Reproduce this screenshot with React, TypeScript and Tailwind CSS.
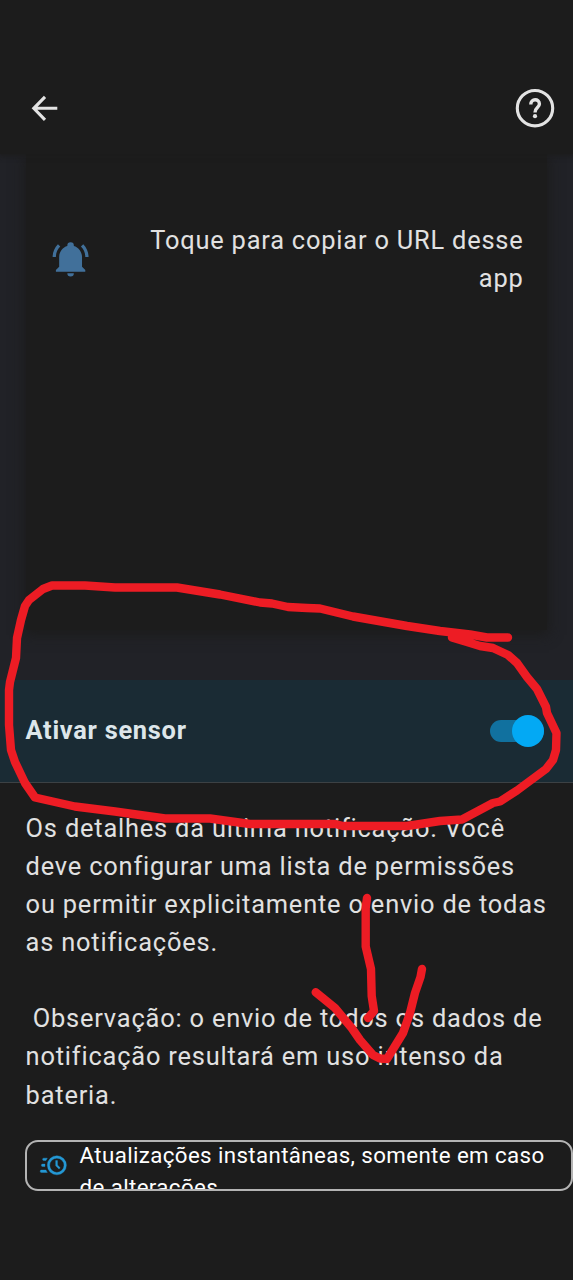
const BELL =
  "M21,19V20H3V19L5,17V11C5,7.9 7.03,5.17 10,4.29C10,4.19 10,4.1 10,4A2,2 0 0,1 12,2A2,2 0 0,1 14,4C14,4.1 14,4.19 14,4.29C16.97,5.17 19,7.9 19,11V17L21,19M14,21A2,2 0 0,1 12,23A2,2 0 0,1 10,21M19.75,3.19L18.33,4.61C20.04,6.3 21,8.6 21,11H23C23,8.07 21.84,5.25 19.75,3.19M1,11H3C3,8.6 3.96,6.3 5.67,4.61L4.25,3.19C2.16,5.25 1,8.07 1,11Z";
const CLOCK_FAST =
  "M15,4A8,8 0 0,1 23,12A8,8 0 0,1 15,20A8,8 0 0,1 7,12A8,8 0 0,1 15,4M15,6A6,6 0 0,0 9,12A6,6 0 0,0 15,18A6,6 0 0,0 21,12A6,6 0 0,0 15,6M14,8H15.5V11.78L17.83,14.11L16.77,15.17L14,12.4V8M2,18A1,1 0 0,1 1,17A1,1 0 0,1 2,16H5.83C6.14,16.71 6.54,17.38 7,18H2M3,13A1,1 0 0,1 2,12A1,1 0 0,1 3,11H5.05L5,12L5.05,13H3M4,8A1,1 0 0,1 3,7A1,1 0 0,1 4,6H7C6.54,6.62 6.14,7.29 5.83,8H4Z";

function TopBar() {
  return (
    <header className="relative z-10 flex h-[154px] shrink-0 items-end justify-between bg-[#1c1c1c] pr-[18px] pb-[25px] pl-[31px] text-[#e3e3e3] shadow-[0_1px_5px_1px_#1c1c1c]">
      <svg width="28" height="42" viewBox="0 0 28 42" fill="none" stroke="currentColor" strokeWidth="3.1">
        <path d="M26.3 21.3H3.5M14 9.8L2.8 21.3L14 32.8" />
      </svg>
      <svg width="40" height="42" viewBox="0 0 40 42" fill="none" stroke="currentColor">
        <circle cx="20" cy="21.2" r="17.7" strokeWidth="3.1" />
        <path d="M15.8 17.6C15.8 11.2 24.4 11.4 24.4 17C24.4 20.6 20 20.6 20 25.4" strokeWidth="3.4" />
        <circle cx="20" cy="29.2" r="2.1" fill="currentColor" stroke="none" />
      </svg>
    </header>
  );
}

function PreviewCard() {
  return (
    <section className="h-[526px] shrink-0 bg-[#212227] px-[26px]">
      <div className="flex h-[476px] items-start justify-between bg-[#1c1c1c] pt-[67px] pr-[23.5px] pl-[24.5px] shadow-[0_3px_12px_2px_#1c1c1c]">
        <svg className="mt-[18px]" width="39.2" height="39.2" viewBox="0 0 24 24" fill="#41709a">
          <path d={BELL} />
        </svg>
        <p className="text-right text-[25.4px] leading-[38px] tracking-[0.8px] text-[#e1e1e1]">
          Toque para copiar o URL desse
          <br />
          app
        </p>
      </div>
    </section>
  );
}

function SensorRow() {
  return (
    <section className="flex h-[103px] shrink-0 items-center justify-between border-b border-[#3c4144] bg-[#1a2b34] pr-[28px] pl-[25.5px]">
      <h1 className="pb-px text-[25.4px] font-bold tracking-[0.73px] text-[#dde6ea]">Ativar sensor</h1>
      <div className="flex h-8 w-[55px] items-center justify-between rounded-full">
        <div className="flex h-[22px] w-[54px] items-center justify-end rounded-full bg-[#11719f]">
          <div className="size-8 shrink-0 rounded-full bg-[#03a9f4]" />
        </div>
      </div>
    </section>
  );
}

function Annotation() {
  return (
    <svg
      className="pointer-events-none absolute inset-0 z-20"
      width="573"
      height="1280"
      viewBox="0 0 573 1280"
      fill="none"
      stroke="#ed1c24"
      strokeWidth="8.4"
      strokeLinecap="round"
      strokeLinejoin="round"
    >
      <path d="M508 637.5L487 637.5L470 634.5L440 631L407 626L353 616.5L320 608.5L307 608L288 607L272 603.5L260 602.5L220 594.5L177 587.5L115 587.5L85 585.5L52 585.5L43 589L29 600L25 606L21 620L17 638L16 658L10 682L9 690L9 725L11 750L15 762L25 783L35 797.5L75 806.5L115 811.5L165 818.5L210 818.5L250 824L335 824L343 826L407 826L440 821L462 819.5L493 803L500 801.5L517 790.5L546 769L553 760L556 750L556.5 733L547 713L546 707L537 689L527 677L517 663L508 655L493 648L480 646L467 642L452 637.5" />
      <path d="M367 898L365.7 908V946.5L371 969L371.7 996L374 1011L368 1018" />
      <path d="M315.7 992.3L335 1008L351.7 1028L360 1040L373 1055L380 1058.5L387 1059L403 1033L410 1013L415 993L420.5 977L422 969" />
    </svg>
  );
}

export default function App() {
  return (
    <main className="relative flex h-[1280px] w-[573px] flex-col overflow-hidden bg-[#1c1c1c] font-[Roboto,sans-serif]">
      <TopBar />
      <PreviewCard />
      <SensorRow />
      <section className="h-[305px] shrink-0 pt-[26px] pl-[25.6px] text-[25.4px] leading-[38.1px] tracking-[0.81px] whitespace-pre text-[#e1e1e1]">
        <p>
          Os detalhes da última notificação. Você{"\n"}deve configurar uma lista de permissões{"\n"}ou permitir explicitamente o envio de todas{"\n"}as notificações.
        </p>
        <p className="mt-[38px]">
          {" "}Observação: o envio de todos os dados de{"\n"}notificação resultará em uso intenso da{"\n"}bateria.
        </p>
      </section>
      <div className="mt-[52px] ml-[25px] flex h-[51px] w-[548px] shrink-0 overflow-hidden rounded-[13px] border-2 border-[#b4b4b4] pl-[12px]">
        <svg className="mt-[9px] shrink-0" width="28.6" height="28.6" viewBox="0 0 24 24" fill="#2498d5" stroke="#2498d5" strokeWidth="0.3">
          <path d={CLOCK_FAST} />
        </svg>
        <p className="-mt-[3px] ml-[12px] text-[22.3px] leading-[32px] tracking-[0.38px] whitespace-pre text-white">
          Atualizações instantâneas, somente em caso{"\n"}de alterações
        </p>
      </div>
      <Annotation />
    </main>
  );
}
